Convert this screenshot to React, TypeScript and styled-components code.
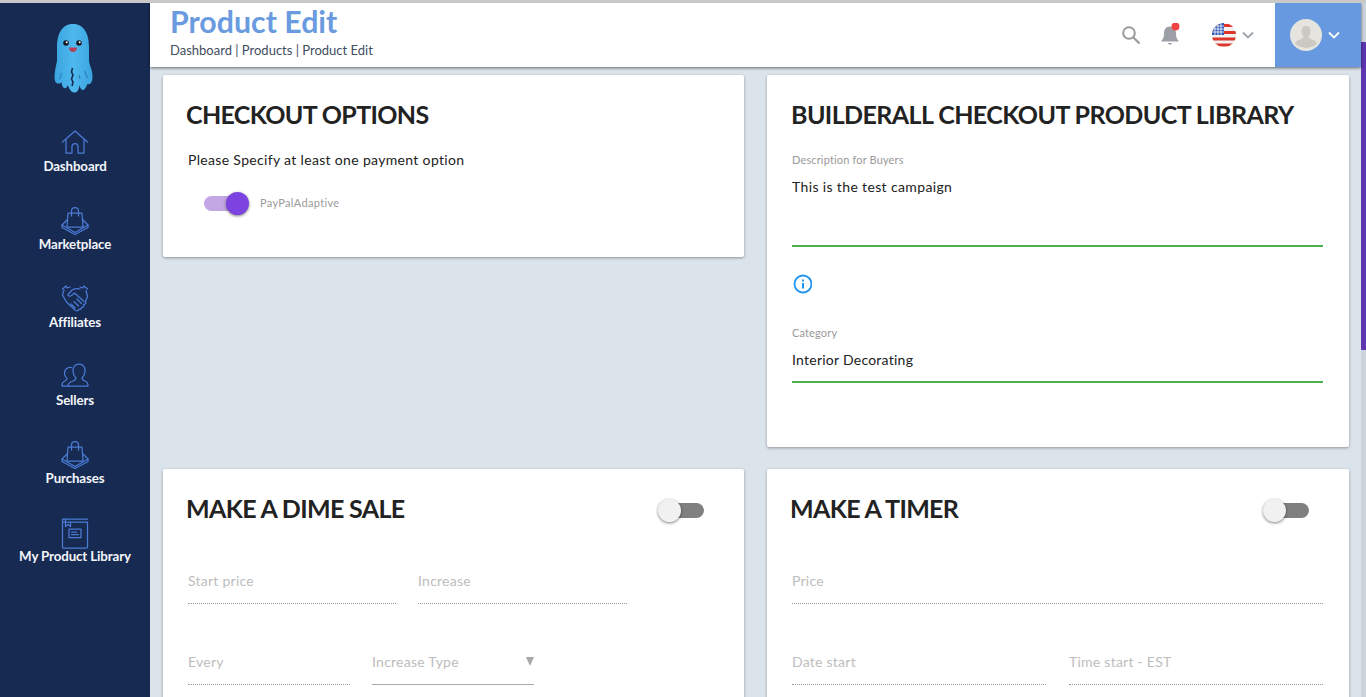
import React from "react";
import styled, { createGlobalStyle } from "styled-components";

const Global = createGlobalStyle`
  html, body { margin: 0; padding: 0; background: #dbe3eb; }
  * { box-sizing: border-box; }
  body { font-family: "Lato", "Noto Sans", sans-serif; }
`;

const Page = styled.div`
  position: relative;
  width: 1366px;
  height: 697px;
  overflow: hidden;
  background: #dbe3eb;
  border-top: 3px solid #c9c9c9;
  display: flex;
`;

const Sidebar = styled.nav`
  width: 150px;
  flex: none;
  background: #172a52;
  display: flex;
  flex-direction: column;
  align-items: center;
  padding-top: 21px;
`;

const Logo = styled.svg`
  width: 40px;
  height: 70px;
  display: block;
  margin-bottom: 34px;
  overflow: visible;
`;

const NavItem = styled.a`
  width: 100%;
  height: 78px;
  display: flex;
  flex-direction: column;
  align-items: center;
  color: #f4f6fa;
  font-size: 13.3px;
  font-weight: 700;
  line-height: 16px;
  letter-spacing: -0.12px;
`;

const NavIcon = styled.svg`
  width: 28px;
  height: 28px;
  margin-bottom: 2px;
  overflow: visible;
  fill: none;
  stroke: #4b7bd4;
  stroke-width: 1.25;
  stroke-linejoin: round;
  stroke-linecap: round;
`;

const Main = styled.div`
  flex: 1;
  min-width: 0;
  display: flex;
  flex-direction: column;
`;

const Header = styled.header`
  position: relative;
  z-index: 2;
  height: 64px;
  width: 1211px;
  flex: none;
  background: #fff;
  box-shadow: 0 1px 3px rgba(0, 0, 0, 0.55);
  display: flex;
  align-items: stretch;
  justify-content: space-between;
`;

const TitleBlock = styled.div`
  padding: 0 0 0 20px;
`;

const PageTitle = styled.h1`
  margin: 0;
  font-size: 30.3px;
  line-height: 36px;
  font-weight: 700;
  color: #6a9be0;
`;

const Crumbs = styled.div`
  margin: 2px 0 0 0;
  font-size: 13px;
  line-height: 18px;
  color: #414d60;
  letter-spacing: 0px;
`;

const HeaderRight = styled.div`
  display: flex;
  align-items: center;
`;

const ToolIcon = styled.svg`
  display: block;
  flex: none;
`;

const Tools = styled.div`
  display: flex;
  align-items: center;
  padding-right: 21px;
`;

const BellIcon = styled(ToolIcon)`
  margin-left: 19px;
`;

const FlagSlot = styled.div`
  margin-left: 32px;
  display: flex;
  align-items: center;
  gap: 6px;
`;

const UserPanel = styled.div`
  width: 86px;
  align-self: stretch;
  background: #6699e0;
  display: flex;
  align-items: center;
  padding-left: 15px;
  gap: 6px;
`;

const Content = styled.div`
  flex: 1;
  min-height: 0;
  width: 1211px;
  padding: 8px 12px 0 13px;
  display: grid;
  grid-template-columns: 581px 582px;
  grid-template-rows: 372px 300px;
  column-gap: 23px;
  row-gap: 22px;
`;

const Card = styled.section<{ $h?: number }>`
  background: #fff;
  border-radius: 2px;
  box-shadow: 0 1px 3px rgba(0, 0, 0, 0.35);
  padding: 21px 40px 0 24px;
  ${(p) => (p.$h ? `height: ${p.$h}px;` : "")}
`;

const CardTitle = styled.h2`
  margin: 0 0 0 -1px;
  font-size: 25px;
  line-height: 36px;
  font-weight: 700;
  color: #222;
  letter-spacing: -0.65px;
  white-space: nowrap;
`;

const WideTitle = styled(CardTitle)`
  margin-left: 0;
  letter-spacing: -0.58px;
`;

const CardHead = styled.div`
  display: flex;
  align-items: center;
  justify-content: space-between;
`;

const Hint = styled.p`
  margin: 18px 0 0 1px;
  font-size: 14px;
  line-height: 20px;
  color: #222;
  letter-spacing: 0.33px;
`;

const SwitchRow = styled.div`
  display: flex;
  align-items: center;
  gap: 12px;
  margin: 26px 0 0 17px;
`;

const Track = styled.span<{ $on?: boolean }>`
  position: relative;
  display: block;
  width: 44px;
  height: 15px;
  border-radius: 8px;
  background: ${(p) => (p.$on ? "#c3a6e4" : "#808080")};
`;

const HeadTrack = styled(Track)`
  margin-top: 4px;
`;

const Thumb = styled.span<{ $on?: boolean }>`
  position: absolute;
  top: -4px;
  ${(p) => (p.$on ? "right: -1px;" : "left: -2px;")}
  width: 23px;
  height: 23px;
  border-radius: 50%;
  background: ${(p) => (p.$on ? "#7c43e0" : "#f1f1f1")};
  box-shadow: 0 1px 3px rgba(0, 0, 0, 0.5);
`;

const SwitchLabel = styled.span`
  font-size: 11px;
  line-height: 13px;
  margin-top: -2px;
  color: #9a9a9a;
  letter-spacing: 0.33px;
`;

const Block = styled.div`
  margin: 21px -14px 0 1px;
`;

const SmallLabel = styled.div`
  font-size: 11px;
  line-height: 14px;
  color: #999;
  letter-spacing: 0.15px;
`;

const Value = styled.div<{ $h: number; $ls: number }>`
  height: ${(p) => p.$h}px;
  padding-top: 10px;
  font-size: 14px;
  line-height: 20px;
  color: #222;
  letter-spacing: ${(p) => p.$ls}px;
  border-bottom: 2px solid #4caf50;
`;

const InfoWrap = styled.div`
  margin: 27px 0 32px;
  height: 20px;
`;

const InfoIcon = styled.svg`
  display: block;
`;

const Fields = styled.div<{ $w: number; $gap: number }>`
  display: flex;
  gap: ${(p) => p.$gap}px;
  width: ${(p) => p.$w}px;
  margin-left: 1px;
`;

const FieldStack = styled.div`
  display: flex;
  flex-direction: column;
  gap: 41px;
  margin-top: 38px;
`;

const Field = styled.div<{ $w: number; $select?: boolean }>`
  position: relative;
  width: ${(p) => p.$w}px;
  height: 40px;
  padding-top: 7px;
  font-size: 14px;
  line-height: 20px;
  color: #bdbdbd;
  letter-spacing: 0.25px;
  border-bottom: 1px ${(p) => (p.$select ? "solid #aaa" : "dotted #9a9a9a")};
`;

const Caret = styled.span`
  position: absolute;
  right: 0;
  top: 12px;
  width: 0;
  height: 0;
  border-left: 4.5px solid transparent;
  border-right: 4.5px solid transparent;
  border-top: 9px solid #a8a8a8;
`;

const ScrollTrack = styled.div`
  position: absolute;
  right: 0;
  top: 0;
  bottom: 0;
  width: 5px;
  background: #cbd3db;
  padding-top: 39px;
`;

const ScrollThumb = styled.div`
  height: 308px;
  background: #5e35b1;
`;

const bag = (
  <>
    <path d="M7 7h14l1 14H6z" />
    <path d="M10.5 10V5a3.5 3.5 0 0 1 7 0v5" />
    <path d="M6 14 1 19l13 7.5 13-7.5-5-5" />
    <path d="M1 19v2.5L14 28.500l13-7V19" />
  </>
);

const navItems: [string, React.ReactNode][] = [
  [
    "Dashboard",
    <>
      <path d="M1.5 14 14 3l12.5 11" />
      <path d="M5 11.5V25h6v-6.500a3 3 0 0 1 6 0V25h6V11.500" />
    </>,
  ],
  ["Marketplace", bag],
  [
    "Affiliates",
    <>
      <path d="M1.500 5 5 2l1 2 3-1M26.500 5 23 2l-1 2-3-1" />
      <path d="M3 6 1.500 11l4 7 9 8.500c2 1 3 0 3-1 2 0 3-1 3-2 2 0 3-2 2-3 2 0 3-2 2-3l2-5-1.500-6" />
      <path d="M19 5c-3-1-6 0-8 1l-4 4.500c0 2 2 2 3.500 1l3-2.500 9.500 8.500" />
      <path d="M10 20l4 4M13 17.500l4.500 4.500M16 15l4.500 4.500" />
    </>,
  ],
  [
    "Sellers",
    <>
      <path d="M7 24c0-3 2-4 5-5 2-.7 3-1.500 3-3-2-2-3-4-3-7 0-5 3-7 6-7s6 2 6 7c0 3-1 5-3 7 0 1.500 1 2.300 3 3 2 .7 3 2 3 5z" />
      <path d="M10.500 5.500C6 5 3 8 3.500 12c.2 2 1 3 2.500 4.500 0 1.500-1 2-3 3-1.500.7-2 2.500-2 4.500h6" />
    </>,
  ],
  ["Purchases", bag],
  [
    "My Product Library",
    <>
      <path d="M1.500 1h25M1.500 1v28a1 1 0 0 0 1 1h23a1 1 0 0 0 1-1V4h-25" />
      <path d="M4.500 1v7.500L7 6.500l2.500 2V4" />
      <rect x="8" y="11" width="12" height="8.500" />
      <path d="M10.500 14h5M10.500 16.500h7" />
    </>,
  ],
];

const Octopus = () => (
  <Logo viewBox="0 0 40 70">
    <defs>
      <linearGradient id="octoBody" x1="0" y1="0" x2="1" y2="0">
        <stop offset="0" stopColor="#3aa4e0" />
        <stop offset="0.5" stopColor="#4fb8ee" />
        <stop offset="1" stopColor="#3aa4e0" />
      </linearGradient>
    </defs>
    <g transform="translate(-1 -1)">
      <path
        fill="url(#octoBody)"
        d="M3 24C3 8 10 1 19 1s16 7 16 23v14c1 6 4 10 3.500 17-.5 5-2.500 7-5 6-1 2-2.500 6-4.500 6s-3-3-3.500-5c-.5 5-2.500 8-5.500 7.500-3-.5-5-3.500-6-7.500-1 2-2 4-4 3-1.500-1-2.500-3-2.500-6-1.500 2-4.500 2-6 0C-.5 55 1 47 3 38z"
      />
      <path stroke="#172a52" strokeWidth="1.600" fill="none" d="M18.500 45l-1 4 1.500 3-1.500 4 1.500 3-1 4" />
      <path stroke="#2d7fb8" strokeWidth="1.100" fill="none" d="M7.500 50l-1 4-1.500 2M31 48l1 4 2 3M25 52l1 4" />
      <circle cx="12" cy="20" r="2.800" fill="#1a1a26" />
      <circle cx="25" cy="20" r="2.800" fill="#1a1a26" />
      <circle cx="12.700" cy="19.300" r="1" fill="#fff" />
      <circle cx="25.700" cy="19.300" r="1" fill="#fff" />
      <path d="M15 24.500h8c0 3-2 4.500-4 4.500s-4-1.500-4-4.500z" fill="#b8405a" />
    </g>
  </Logo>
);

const UsFlag = () => (
  <ToolIcon width="24" height="24" viewBox="0 0 24 24">
    <defs>
      <clipPath id="flagClip">
        <circle cx="12" cy="12" r="12" />
      </clipPath>
    </defs>
    <g clipPath="url(#flagClip)">
      <rect width="24" height="24" fill="#f2f2f2" />
      <rect y="1" width="24" height="3" fill="#e0352b" />
      <rect y="8" width="24" height="3" fill="#e0352b" />
      <rect y="14.500" width="24" height="3" fill="#e0352b" />
      <rect y="20.500" width="24" height="3" fill="#e0352b" />
      <rect width="12" height="12" fill="#2f55b5" />
      <path d="M3 0v12M6 0v12M9 0v12M0 3h12M0 6h12M0 9h12" stroke="#fff" strokeWidth="0.800" />
    </g>
  </ToolIcon>
);

const Chevron = ({ color }: { color: string }) => (
  <ToolIcon width="12" height="8" viewBox="0 0 12 8">
    <path d="M1 1.500l5 5 5-5" fill="none" stroke={color} strokeWidth="1.800" />
  </ToolIcon>
);

const Fieldset = ({ gap, rows }: { gap: number[]; rows: { t: string; w: number; s?: boolean }[][] }) => (
  <FieldStack>
    {rows.map((r, i) => (
      <Fields key={i} $gap={gap[i]} $w={r.reduce((a, f) => a + f.w + gap[i], -gap[i])}>
        {r.map((f) => (
          <Field key={f.t} $w={f.w} $select={f.s}>
            {f.t}
            {f.s && <Caret />}
          </Field>
        ))}
      </Fields>
    ))}
  </FieldStack>
);

export default function App() {
  return (
    <Page>
      <Global />
      <Sidebar>
        <Octopus />
        {navItems.map(([label, icon]) => (
          <NavItem key={label}>
            <NavIcon viewBox="0 0 28 28">{icon}</NavIcon>
            {label}
          </NavItem>
        ))}
      </Sidebar>
      <Main>
        <Header>
          <TitleBlock>
            <PageTitle>Product Edit</PageTitle>
            <Crumbs>Dashboard | Products | Product Edit</Crumbs>
          </TitleBlock>
          <HeaderRight>
            <Tools>
              <ToolIcon width="20" height="20" viewBox="0 0 20 20">
                <circle cx="8" cy="8" r="5.800" fill="none" stroke="#9b9b9b" strokeWidth="2" />
                <path d="M12.500 12.500l6 6" stroke="#9b9b9b" strokeWidth="2.200" />
              </ToolIcon>
              <BellIcon width="20" height="24" viewBox="0 0 20 24">
                <path d="M10 3.500c-4.500 0-6 3.500-6 7 0 4.500-1.500 6-3 8h18c-1.500-2-3-3.500-3-8 0-3.500-1.500-7-6-7z" fill="#9ca0a6" />
                <path d="M7.500 20h5L10 22z" fill="#9ca0a6" />
                <circle cx="15.500" cy="3.500" r="4" fill="#f04444" />
              </BellIcon>
              <FlagSlot>
                <UsFlag />
                <Chevron color="#9ca3ab" />
              </FlagSlot>
            </Tools>
            <UserPanel>
              <ToolIcon width="32" height="32" viewBox="0 0 32 32">
                <circle cx="16" cy="16" r="16" fill="#e5e4df" />
                <path
                  d="M16 7c3 0 4.500 2 4.500 5 0 2.500-1 4.500-2 5.500 0 1.500 1 2 3.500 3 2 .8 4 1.500 5 4A16 16 0 0 1 5 24.500c1-2.500 3-3.200 5-4 2.500-1 3.500-1.500 3.500-3-1-1-2-3-2-5.500 0-3 1.500-5 4.500-5z"
                  fill="#ccc9c3"
                />
              </ToolIcon>
              <Chevron color="#fff" />
            </UserPanel>
          </HeaderRight>
        </Header>
        <Content>
          <Card $h={182}>
            <CardTitle>CHECKOUT OPTIONS</CardTitle>
            <Hint>Please Specify at least one payment option</Hint>
            <SwitchRow>
              <Track $on>
                <Thumb $on />
              </Track>
              <SwitchLabel>PayPalAdaptive</SwitchLabel>
            </SwitchRow>
          </Card>
          <Card>
            <WideTitle>BUILDERALL CHECKOUT PRODUCT LIBRARY</WideTitle>
            <Block>
              <SmallLabel>Description for Buyers</SmallLabel>
              <Value $h={80} $ls={0.36}>This is the test campaign</Value>
              <InfoWrap>
                <InfoIcon width="20" height="20" viewBox="0 0 20 20">
                  <circle cx="11" cy="10" r="8.500" fill="none" stroke="#2196f3" strokeWidth="1.800" />
                  <rect x="10" y="9" width="2" height="5.500" fill="#2196f3" />
                  <rect x="10" y="5.500" width="2" height="2" fill="#2196f3" />
                </InfoIcon>
              </InfoWrap>
              <SmallLabel>Category</SmallLabel>
              <Value $h={43} $ls={0.25}>Interior Decorating</Value>
            </Block>
          </Card>
          <Card>
            <CardHead>
              <CardTitle>MAKE A DIME SALE</CardTitle>
              <HeadTrack>
                <Thumb />
              </HeadTrack>
            </CardHead>
            <Fieldset
              gap={[22, 22]}
              rows={[
                [
                  { t: "Start price", w: 208 },
                  { t: "Increase", w: 209 },
                ],
                [
                  { t: "Every", w: 162 },
                  { t: "Increase Type", w: 162, s: true },
                ],
              ]}
            />
          </Card>
          <Card>
            <CardHead>
              <CardTitle>MAKE A TIMER</CardTitle>
              <HeadTrack>
                <Thumb />
              </HeadTrack>
            </CardHead>
            <Fieldset
              gap={[23, 23]}
              rows={[
                [{ t: "Price", w: 531 }],
                [
                  { t: "Date start", w: 254 },
                  { t: "Time start - EST", w: 254 },
                ],
              ]}
            />
          </Card>
        </Content>
      </Main>
      <ScrollTrack>
        <ScrollThumb />
      </ScrollTrack>
    </Page>
  );
}
